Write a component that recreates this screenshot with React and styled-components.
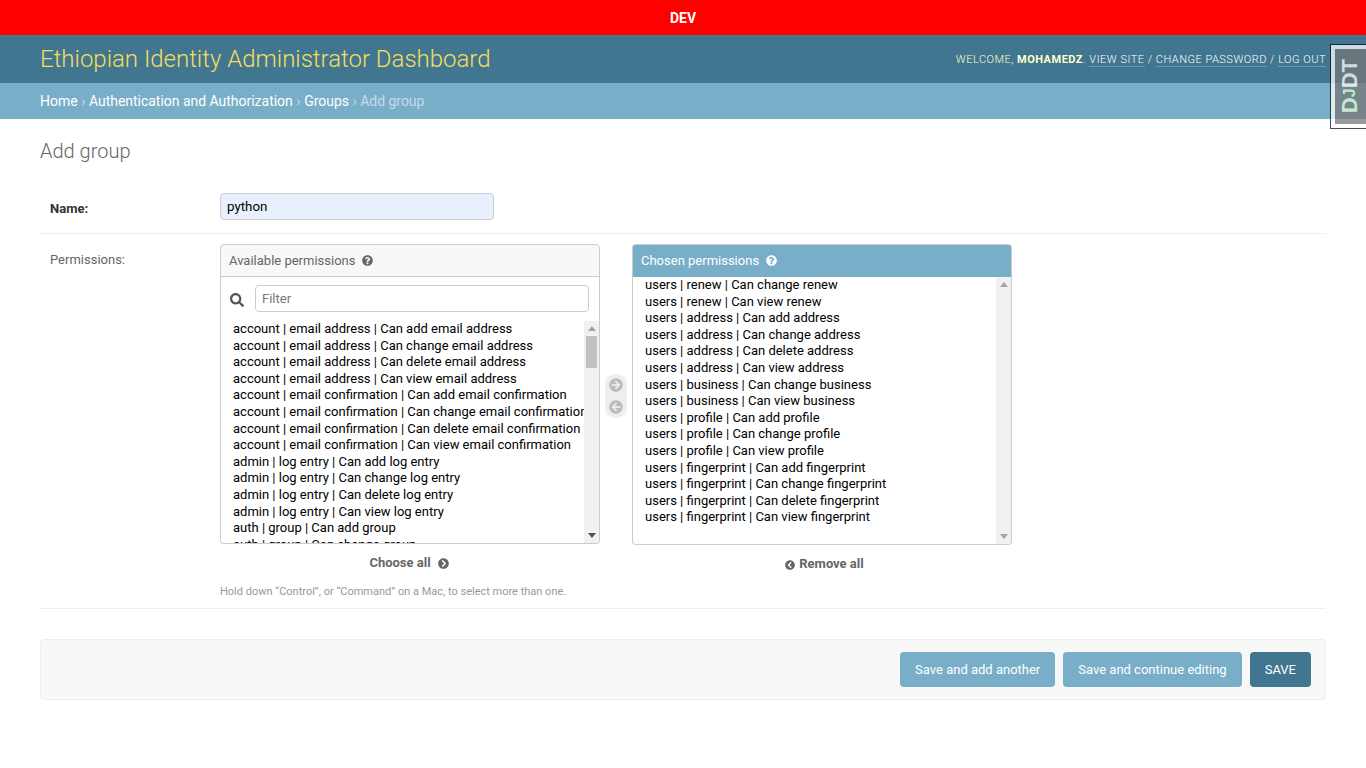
import React from 'react';
import styled, { createGlobalStyle } from 'styled-components';
import {
  FaArrowCircleLeft,
  FaArrowCircleRight,
  FaChevronCircleLeft,
  FaChevronCircleRight,
  FaQuestionCircle,
  FaSearch,
} from 'react-icons/fa';

const Global = createGlobalStyle`
  html, body {
    margin: 0;
    padding: 0;
    background: #fff;
  }
  body {
    color: #333;
    font-family: Roboto, "Liberation Sans", Arial, sans-serif;
    font-size: 14px;
  }
  * {
    box-sizing: border-box;
  }
`;

const Page = styled.div`
  position: relative;
  min-height: 768px;
`;

const EnvBar = styled.div`
  align-items: center;
  background: #ff0000;
  color: #fff;
  display: flex;
  font-size: 14px;
  font-weight: 700;
  height: 35px;
  justify-content: center;
`;

const Header = styled.header`
  align-items: center;
  background: #417690;
  display: flex;
  height: 48px;
  justify-content: space-between;
  padding: 0 40px;
`;

const Brand = styled.h1`
  color: #f5dd5d;
  font-size: 23.97px;
  font-weight: 300;
  margin: 0;
`;

const UserTools = styled.div`
  color: #ffc;
  font-size: 11px;
  font-weight: 300;
  letter-spacing: 0.5px;
  text-transform: uppercase;

  strong {
    font-weight: 700;
  }
`;

const ToolLink = styled.a`
  border-bottom: 1px solid rgba(255, 255, 255, 0.25);
  color: #fff;
  text-decoration: none;
`;

const Crumbs = styled.nav`
  align-items: center;
  background: #79aec8;
  color: #c4dce8;
  display: flex;
  font-size: 13.96px;
  gap: 3.6px;
  height: 36px;
  padding: 0 40px;
`;

const Crumb = styled.a`
  color: #fff;
  text-decoration: none;
`;

const Content = styled.main`
  padding: 20px 40px;
`;

const Title = styled.h2`
  color: #666;
  font-size: 20px;
  font-weight: 300;
  line-height: 24px;
  margin: 0 0 30px;
`;

const Row = styled.div`
  border-bottom: 1px solid #eee;
  display: flex;
  padding: ${(p) => p.$padding};
`;

const Label = styled.label`
  color: ${(p) => (p.$required ? '#333' : '#666')};
  flex: 0 0 170px;
  font-size: 13px;
  font-weight: ${(p) => (p.$required ? 700 : 400)};
  margin-left: 10px;
  padding-top: 8px;
`;

const NameInput = styled.input`
  background: #e8f0fe;
  border: 1px solid #ccc;
  border-radius: 4px;
  color: #000;
  font-family: inherit;
  font-size: 13.33px;
  height: 27px;
  padding: 2px 6px;
  width: 274px;
`;

const Field = styled.div`
  display: flex;
  flex-direction: column;
`;

const Selector = styled.div`
  display: flex;
`;

const SelectorColumn = styled.div`
  display: flex;
  flex-direction: column;
  width: 380px;
`;

const SelectorTitle = styled.h3`
  align-items: center;
  background: ${(p) => (p.$chosen ? '#79aec8' : '#f8f8f8')};
  border: 1px solid #ccc;
  border-bottom-color: ${(p) => (p.$chosen ? '#79aec8' : '#ccc')};
  border-radius: 4px 4px 0 0;
  color: ${(p) => (p.$chosen ? '#fff' : '#666')};
  display: flex;
  font-size: 13px;
  font-weight: 400;
  gap: 7px;
  height: 33px;
  margin: 0;
  padding: 0 8px;
`;

const FilterBar = styled.div`
  align-items: center;
  border-left: 1px solid #ccc;
  border-right: 1px solid #ccc;
  color: #555;
  display: flex;
  gap: 11px;
  height: 44px;
  padding: 0 10px 1px 9px;
`;

const SearchIcon = styled(FaSearch)`
  margin-top: 3px;
`;

const FilterInput = styled.input`
  border: 1px solid #ccc;
  border-radius: 4px;
  flex: 1;
  font-family: inherit;
  font-size: 13px;
  height: 27px;
  padding: 2px 6px;

  &::placeholder {
    color: #777;
  }
`;

const ListBox = styled.div`
  background: #fff;
  border: 1px solid #ccc;
  border-radius: 0 0 4px 4px;
  border-top: 0;
  display: flex;
  height: ${(p) => (p.$chosen ? '268px' : '223px')};
  overflow: hidden;
`;

const Options = styled.div`
  flex: 1;
  min-width: 0;
  overflow: hidden;
  padding: 0 0 0 10px;
`;

const Option = styled.div`
  color: #000;
  font-size: 13px;
  height: 16.6px;
  line-height: 15.6px;
  padding: 0 2px;
  white-space: nowrap;
`;

const ScrollTrack = styled.div`
  background: #f1f1f1;
  display: flex;
  flex: 0 0 15px;
  flex-direction: column;
`;

const ScrollArrow = styled.div`
  align-items: center;
  display: flex;
  flex: 0 0 15px;
  justify-content: center;

  &::before {
    border-left: 4.5px solid transparent;
    border-right: 4.5px solid transparent;
    border-${(p) => (p.$down ? 'top' : 'bottom')}: 5px solid ${(p) => (p.$active ? '#505050' : '#a3a3a3')};
    content: "";
  }
`;

const ScrollThumb = styled.div`
  background: #c1c1c1;
  flex: 0 0 32px;
  margin: 0 2px;
`;

const ScrollGap = styled.div`
  flex: 1;
`;

const ChooseLink = styled.a`
  align-items: center;
  color: #666;
  display: flex;
  font-size: 13px;
  font-weight: 700;
  gap: ${(p) => p.$gap};
  justify-content: center;
  margin-top: 11px;
  padding-left: ${(p) => p.$shift || '0'};
  padding-right: ${(p) => (p.$shift ? '0' : '2px')};
  text-decoration: none;

  svg {
    margin-top: 2px;
  }
`;

const Chooser = styled.div`
  align-items: center;
  align-self: flex-start;
  background: #eee;
  border-radius: 10px;
  color: #bbb;
  display: flex;
  flex-direction: column;
  font-size: 14px;
  gap: 8px;
  margin: 130px 5px 0;
  padding: 4px 0;
  width: 22px;
`;

const Help = styled.p`
  color: #999;
  font-size: 11px;
  line-height: 14px;
  margin: 14px 0 0;
`;

const SubmitRow = styled.div`
  background: #f8f8f8;
  border: 1px solid #eee;
  border-radius: 4px;
  display: flex;
  gap: 8px;
  justify-content: flex-end;
  margin-top: 30px;
  padding: 12px 14px;
`;

const SaveButton = styled.button`
  background: ${(p) => (p.$primary ? '#417690' : '#79aec8')};
  border: 0;
  border-radius: 4px;
  color: #fff;
  font-family: inherit;
  font-size: 13px;
  height: 35px;
  padding: 0 15px;
`;

const DebugHandle = styled.div`
  background: #fff;
  border: 1px solid #111;
  border-right: 0;
  opacity: 0.75;
  position: absolute;
  right: 0;
  top: 44px;
`;

const DebugButton = styled.a`
  align-items: center;
  background: #777;
  border: 4px solid #fff;
  border-right: 0;
  color: #fff;
  display: flex;
  font-family: "Liberation Sans", Arial, sans-serif;
  font-size: 22px;
  font-weight: 700;
  height: 83px;
  justify-content: center;
  line-height: 30px;
  padding-right: 2px;
  width: 35px;
  writing-mode: vertical-rl;
`;

const DebugText = styled.span`
  transform: rotate(180deg);
`;

const DebugD = styled.span`
  color: #dcffd0;
`;

const DebugJ = styled.span`
  color: #dcffd0;
  font-size: 16px;
`;

const available = [
  ...['email address', 'email confirmation'].flatMap((model) =>
    ['add', 'change', 'delete', 'view'].map((verb) => `account | ${model} | Can ${verb} ${model}`)
  ),
  ...['add', 'change', 'delete', 'view'].map((verb) => `admin | log entry | Can ${verb} log entry`),
  'auth | group | Can add group',
  'auth | group | Can change group',
];

const chosen = [
  'users | renew | Can change renew',
  'users | renew | Can view renew',
  'users | address | Can add address',
  'users | address | Can change address',
  'users | address | Can delete address',
  'users | address | Can view address',
  'users | business | Can change business',
  'users | business | Can view business',
  'users | profile | Can add profile',
  'users | profile | Can change profile',
  'users | profile | Can view profile',
  'users | fingerprint | Can add fingerprint',
  'users | fingerprint | Can change fingerprint',
  'users | fingerprint | Can delete fingerprint',
  'users | fingerprint | Can view fingerprint',
];

const PermissionList = ({ items, chosen: isChosen }) => (
  <ListBox $chosen={isChosen}>
    <Options>
      {items.map((item) => (
        <Option key={item}>{item}</Option>
      ))}
    </Options>
    <ScrollTrack>
      <ScrollArrow />
      {!isChosen && <ScrollThumb />}
      <ScrollGap />
      <ScrollArrow $down $active={!isChosen} />
    </ScrollTrack>
  </ListBox>
);

const App = () => (
  <Page>
    <Global />
    <EnvBar>DEV</EnvBar>
    <Header>
      <Brand>Ethiopian Identity Administrator Dashboard</Brand>
      <UserTools>
        Welcome, <strong>mohamedz</strong>. <ToolLink href="#">View site</ToolLink> / <ToolLink href="#">Change password</ToolLink> / <ToolLink href="#">Log out</ToolLink>
      </UserTools>
    </Header>
    <Crumbs>
      <Crumb href="#">Home</Crumb>›
      <Crumb href="#">Authentication and Authorization</Crumb>›
      <Crumb href="#">Groups</Crumb>› Add group
    </Crumbs>
    <Content>
      <Title>Add group</Title>
      <Row $padding="0 0 13px">
        <Label $required>Name:</Label>
        <NameInput defaultValue="python" />
      </Row>
      <Row $padding="10px 0 9px">
        <Label>Permissions:</Label>
        <Field>
          <Selector>
            <SelectorColumn>
              <SelectorTitle>
                Available permissions <FaQuestionCircle size={11} />
              </SelectorTitle>
              <FilterBar>
                <SearchIcon size={14} />
                <FilterInput placeholder="Filter" />
              </FilterBar>
              <PermissionList items={available} />
              <ChooseLink href="#" $gap="7px">
                Choose all <FaChevronCircleRight size={11} />
              </ChooseLink>
            </SelectorColumn>
            <Chooser>
              <FaArrowCircleRight />
              <FaArrowCircleLeft />
            </Chooser>
            <SelectorColumn>
              <SelectorTitle $chosen>
                Chosen permissions <FaQuestionCircle size={11} />
              </SelectorTitle>
              <PermissionList items={chosen} chosen />
              <ChooseLink href="#" $gap="4px" $shift="5px">
                <FaChevronCircleLeft size={10} /> Remove all
              </ChooseLink>
            </SelectorColumn>
          </Selector>
          <Help>Hold down “Control”, or “Command” on a Mac, to select more than one.</Help>
        </Field>
      </Row>
      <SubmitRow>
        <SaveButton>Save and add another</SaveButton>
        <SaveButton>Save and continue editing</SaveButton>
        <SaveButton $primary>SAVE</SaveButton>
      </SubmitRow>
    </Content>
    <DebugHandle>
      <DebugButton>
        <DebugText>
          <DebugD>D</DebugD>
          <DebugJ>J</DebugJ>DT
        </DebugText>
      </DebugButton>
    </DebugHandle>
  </Page>
);

export default App;
